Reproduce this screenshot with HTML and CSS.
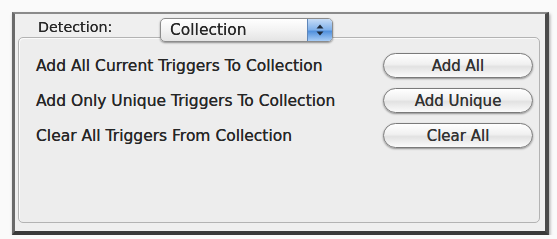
FILE: index.html
```html
<!DOCTYPE html>
<html lang="en">
<head>
    <meta charset="UTF-8">
    <title>Detection</title>
    <link rel="stylesheet" href="styles.css">
</head>
<body>
    <div class="window">
        <div class="header">
            <span class="label">Detection:</span>
            <div class="popup">
                <span class="popup-text">Collection</span>
                <span class="popup-arrows">
                    <svg width="8" height="12" viewBox="0 0 8 12">
                        <path d="M4 0.5 L7.5 4.5 L0.5 4.5 Z" fill="#1e2a3a"/>
                        <path d="M4 11.5 L7.5 7.5 L0.5 7.5 Z" fill="#1e2a3a"/>
                    </svg>
                </span>
            </div>
        </div>
        <div class="group">
            <div class="row">
                <span class="row-text">Add All Current Triggers To Collection</span>
                <button class="btn">Add All</button>
            </div>
            <div class="row">
                <span class="row-text">Add Only Unique Triggers To Collection</span>
                <button class="btn">Add Unique</button>
            </div>
            <div class="row">
                <span class="row-text">Clear All Triggers From Collection</span>
                <button class="btn">Clear All</button>
            </div>
        </div>
    </div>
</body>
</html>
```

FILE: styles.css
```css
body, html {
    margin: 0;
    padding: 0;
    background: #fafafa;
    font-family: "DejaVu Sans", "Liberation Sans", sans-serif;
    color: #262626;
}
.window {
    box-sizing: border-box;
    margin: 12px 0 0 12px;
    width: 537px;
    height: 223px;
    border-top: 2px solid #8a8a8a;
    border-left: 3px solid #6a6a6a;
    border-right: 4px solid #4a4a4a;
    border-bottom: 4px solid #3a3a3a;
    background: #efefef;
    box-shadow: 1px 2px 3px rgba(0, 0, 0, 0.35);
    padding: 4px 5px 8px 3px;
    display: flex;
    flex-direction: column;
    filter: blur(0.4px); /* source is a soft capture */
    text-shadow: 0 0 0.6px #333;
}
.header {
    height: 19px;
    display: flex;
    align-items: flex-start;
    padding-left: 20px;
    position: relative;
    z-index: 1;
}
.label {
    flex: 0 0 122px;
    font-size: 14.3px;
    line-height: 18px;
}
.popup {
    width: 173px;
    height: 24px;
    box-sizing: border-box;
    border: 1px solid #8c8c8c;
    border-radius: 5px;
    background: linear-gradient(#ffffff, #f3f3f3 50%, #e4e4e4);
    box-shadow: 0 1px 2px rgba(0, 0, 0, 0.4);
    display: flex;
    overflow: hidden;
}
.popup-text {
    flex: 1;
    padding-left: 9px;
    font-size: 15.5px;
    line-height: 22px;
}
.popup-arrows {
    width: 24px;
    border-left: 1px solid #5f86b8;
    background: linear-gradient(#c6dcf6, #7fb0ea 50%, #4f8fdc 55%, #a8cdf6);
    display: flex;
    align-items: center;
    justify-content: center;
}
.group {
    flex: 1;
    border: 1px solid #b3b3b3;
    border-radius: 5px;
    background: #ededed;
    box-shadow: inset 1px 1px 0 #fafafa;
    padding: 15px 6px 0 17px;
    display: flex;
    flex-direction: column;
    gap: 10px;
}
.row {
    display: flex;
    align-items: center;
    justify-content: space-between;
    height: 25px;
}
.row-text {
    font-size: 15.5px;
}
.btn {
    width: 150px;
    height: 25px;
    border: 1px solid #7a7a7a;
    border-radius: 13px;
    background: linear-gradient(#ffffff, #f0f0f0 45%, #e2e2e2 55%, #fbfbfb);
    box-shadow: 0 1px 2px rgba(0, 0, 0, 0.4);
    font-family: inherit;
    font-size: 15px;
    color: #333;
    text-shadow: inherit;
    padding: 0;
}
```
